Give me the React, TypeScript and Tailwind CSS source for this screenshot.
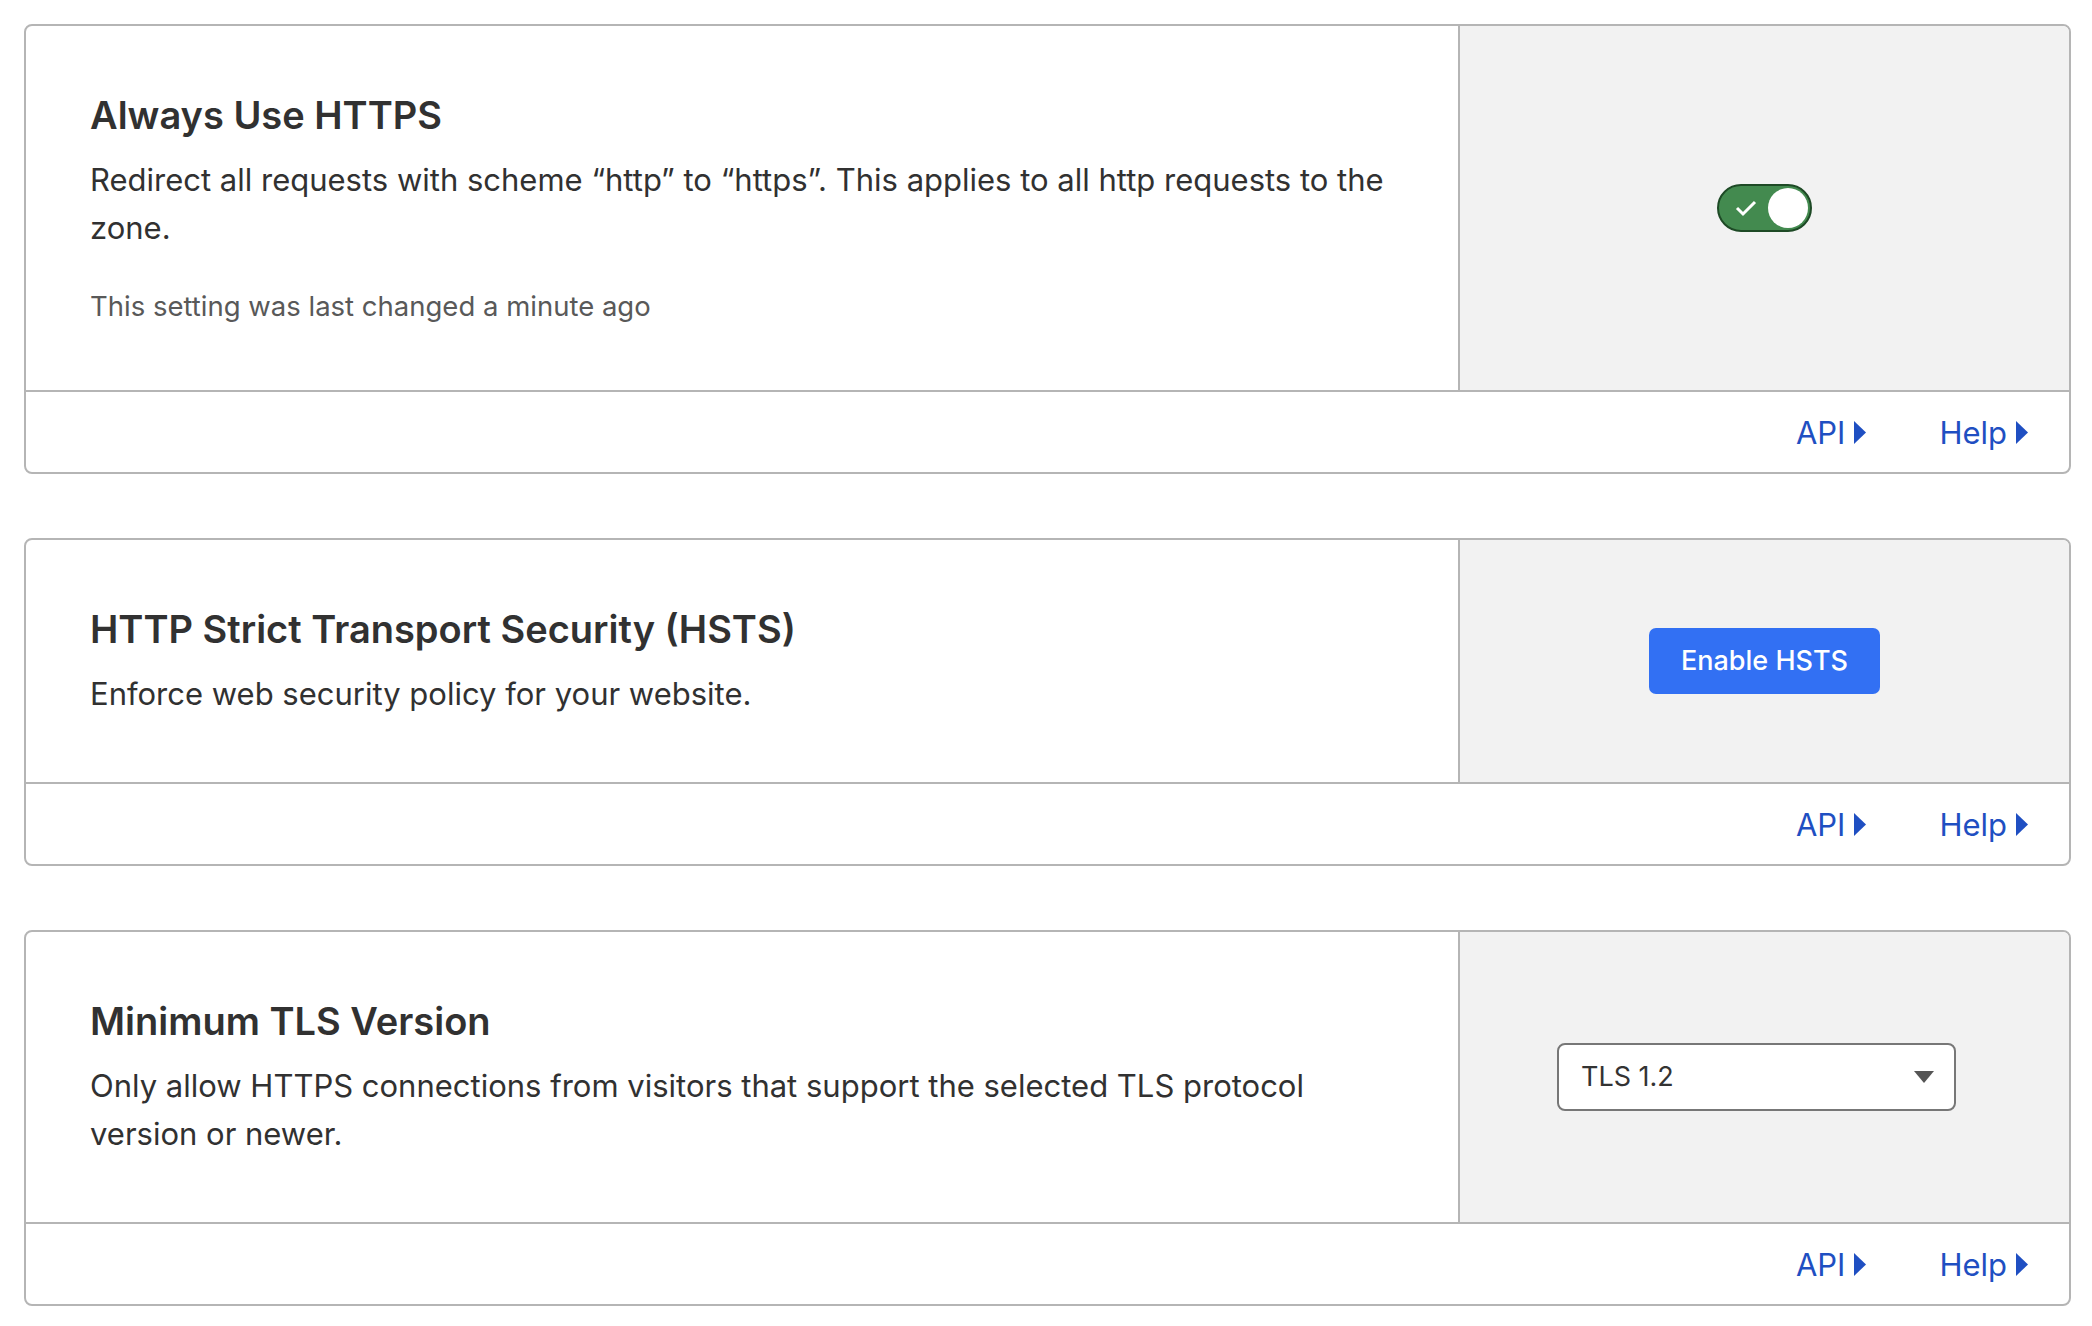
import React from "react";

function Tri() {
  return (
    <svg width="14" height="25" viewBox="0 0 14 25" className="ml-[8px]">
      <path d="M1 1 L13 12.5 L1 24 Z" fill="#1f4fc2" />
    </svg>
  );
}

function Footer() {
  return (
    <div className="flex h-[82px] items-center justify-end pr-[40px] border-t-2 border-[#b5b5b5]">
      <a className="flex items-center text-[31px] leading-none text-[#1f4fc2] mr-[72px]">
        API
        <Tri />
      </a>
      <a className="flex items-center text-[31px] leading-none text-[#1f4fc2]">
        Help
        <Tri />
      </a>
    </div>
  );
}

function Card({
  title,
  children,
  right,
}: {
  title: string;
  children: React.ReactNode;
  right: React.ReactNode;
}) {
  return (
    <div className="w-[2047px] rounded-[8px] border-2 border-[#b5b5b5] bg-white overflow-hidden">
      <div className="flex">
        <div className="w-[1434px] px-[64px] py-[64px] border-r-2 border-[#b5b5b5]">
          <h2 className="text-[38px] leading-[50px] font-semibold text-[#313131]">{title}</h2>
          {children}
        </div>
        <div className="flex-1 bg-[#f2f2f2] flex items-center justify-center">{right}</div>
      </div>
      <Footer />
    </div>
  );
}

function Toggle() {
  return (
    <div className="relative w-[95px] h-[48px] rounded-full bg-[#438a4f] border-2 border-[#1e4a26]">
      <svg width="22" height="18" viewBox="0 0 22 18" className="absolute left-[16px] top-[13px]">
        <path d="M2 9 L8 15 L20 3" stroke="white" strokeWidth="3" fill="none" />
      </svg>
      <div className="absolute right-[2px] top-[2px] w-[40px] h-[40px] rounded-full bg-white" />
    </div>
  );
}

export default function App() {
  return (
    <div
      className="min-h-[1326px] bg-white pt-[24px] pl-[24px] flex flex-col gap-[64px]"
      style={{ fontFamily: "Inter, 'Liberation Sans', sans-serif" }}
    >
      <Card title="Always Use HTTPS" right={<Toggle />}>
        <p className="mt-[16px] text-[31px] leading-[48px] text-[#313131]">
          Redirect all requests with scheme “http” to “https”. This applies to all http requests to the
          <br />
          zone.
        </p>
        <p className="mt-[34px] text-[27.5px] leading-[40px] text-[#595959]">
          This setting was last changed a minute ago
        </p>
      </Card>
      <Card
        title="HTTP Strict Transport Security (HSTS)"
        right={
          <button className="w-[231px] h-[66px] rounded-[7px] bg-[#3270f3] text-white text-[27px] font-medium">
            Enable HSTS
          </button>
        }
      >
        <p className="mt-[16px] text-[31px] leading-[48px] text-[#313131]">
          Enforce web security policy for your website.
        </p>
      </Card>
      <Card
        title="Minimum TLS Version"
        right={
          <div className="mr-[16px] w-[399px] h-[68px] rounded-[8px] border-2 border-[#777777] bg-white flex items-center justify-between pl-[22px] pr-[20px]">
            <span className="text-[27px] text-[#333333]">TLS 1.2</span>
            <svg width="20" height="12" viewBox="0 0 20 12">
              <path d="M0 0 L20 0 L10 12 Z" fill="#555555" />
            </svg>
          </div>
        }
      >
        <p className="mt-[16px] text-[31px] leading-[48px] text-[#313131]">
          Only allow HTTPS connections from visitors that support the selected TLS protocol
          <br />
          version or newer.
        </p>
      </Card>
    </div>
  );
}
